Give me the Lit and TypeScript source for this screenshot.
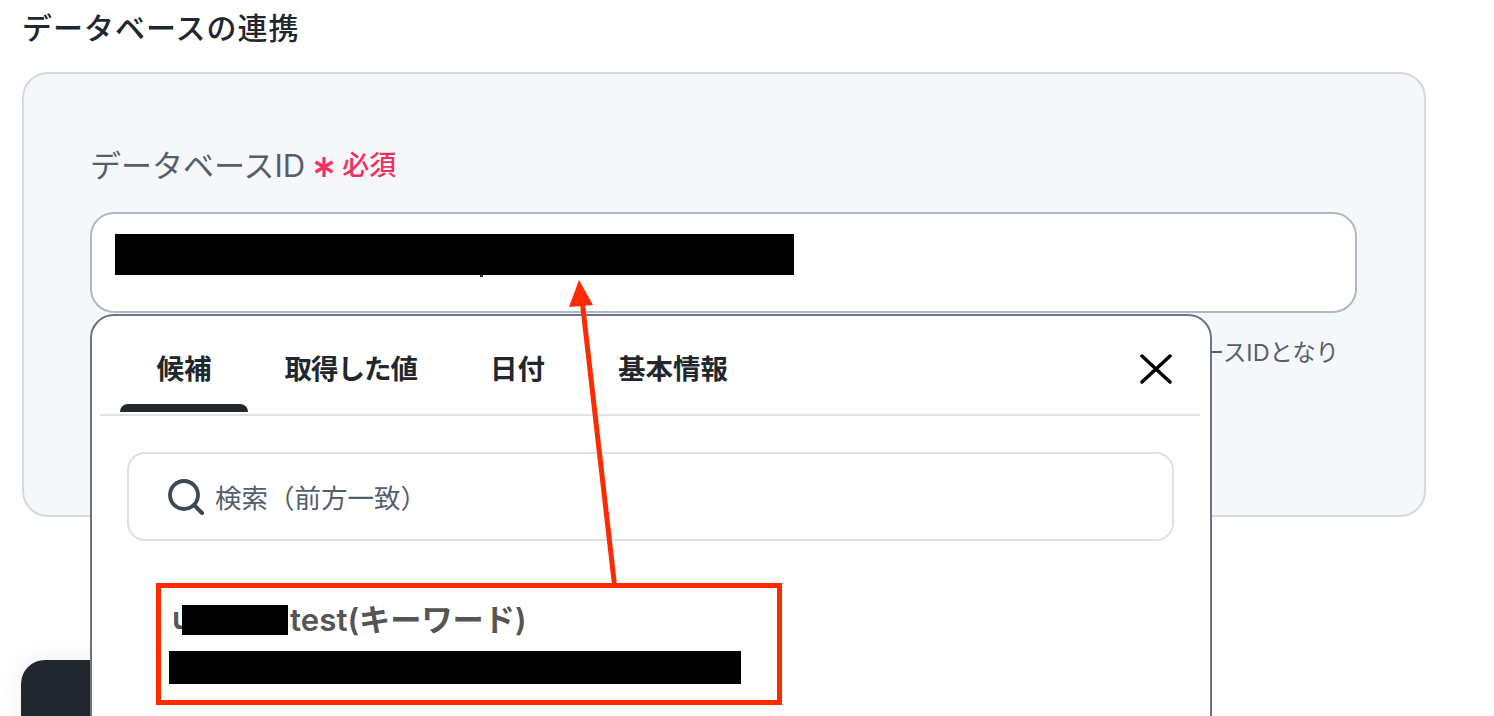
import { html, css, LitElement } from 'lit';
import { customElement } from 'lit/decorators.js';

const TABS = ['候補', '取得した値', '日付', '基本情報'];

@customElement('app-root')
export class AppRoot extends LitElement {
  static styles = css`
    :host {
      display: block;
      position: relative;
      width: 1494px;
      height: 716px;
      overflow: hidden;
      background: #fff;
      font-family: Inter, 'Noto Sans CJK JP', sans-serif;
      color: #22272e;
    }

    .page {
      padding: 8px 68px 0 22px;
    }

    h1 {
      margin: 0 0 24px;
      font-size: 30px;
      line-height: 40px;
      font-weight: 500;
      letter-spacing: 1px;
      color: #22272e;
    }

    .panel {
      box-sizing: border-box;
      height: 445px;
      padding: 67px 67px 0 66px;
      background: #f6f7f9;
      border: 2px solid #d3d9e1;
      border-radius: 26px;
    }

    .label {
      display: flex;
      align-items: center;
      height: 44px;
      font-size: 31px;
      color: #555f6b;
    }

    .star {
      margin: 8px 0 0 9px;
      width: 20px;
      height: 22px;
    }

    .required {
      margin-left: 8px;
      font-size: 27px;
      font-weight: 500;
      color: #f5305f;
    }

    .input {
      box-sizing: border-box;
      height: 101px;
      margin-top: 27px;
      padding: 20px 0 0 23px;
      background: #fff;
      border: 2px solid #b0b8c4;
      border-radius: 24px;
    }

    .mask {
      position: relative;
      width: 679px;
      height: 41px;
      background: #000;
    }

    .mask::after {
      content: '';
      position: absolute;
      left: 365px;
      top: 41px;
      width: 3px;
      height: 2px;
      background: #333;
    }

    .help {
      margin-top: 24px;
      padding-right: 18px;
      text-align: right;
      font-size: 23.4px;
      line-height: 32px;
      color: #555f6b;
      white-space: nowrap;
    }

    .action {
      position: absolute;
      left: 21px;
      top: 660px;
      width: 300px;
      height: 120px;
      background: #22272e;
      border-radius: 24px;
      box-shadow: 0 0 24px rgba(34, 39, 46, 0.08);
    }

    .dropdown {
      position: absolute;
      left: 90px;
      top: 314px;
      box-sizing: border-box;
      width: 1122px;
      height: 460px;
      padding: 0 10px 0 8px;
      background: #fff;
      border: 2px solid #6b7480;
      border-radius: 24px;
    }

    .tabs {
      position: relative;
      display: flex;
      align-items: flex-start;
      height: 98px;
      padding-left: 20px;
      border-bottom: 2px solid #dfe3e8;
    }

    .tab {
      box-sizing: border-box;
      height: 98px;
      padding: 33px 36.5px 0;
      font-size: 27.5px;
      line-height: 40px;
      font-weight: 700;
      white-space: nowrap;
      color: #22272e;
    }

    .tab:nth-child(2) {
      letter-spacing: -1px;
    }

    .tab.active {
      position: relative;
    }

    .tab.active::after {
      content: '';
      position: absolute;
      left: 0;
      right: 0;
      bottom: 2px;
      height: 8px;
      background: #22272e;
      border-radius: 8px 8px 0 0;
    }

    .close {
      position: absolute;
      right: 28px;
      top: 38px;
      width: 32px;
      height: 30px;
    }

    .search {
      box-sizing: border-box;
      display: flex;
      align-items: center;
      gap: 11px;
      height: 89px;
      margin: 36px 26px 0 27px;
      padding-left: 39px;
      border: 2px solid #dde2e8;
      border-radius: 18px;
      font-size: 26.5px;
      color: #555f6b;
    }

    .search svg {
      width: 36px;
      height: 36px;
      flex: none;
    }

    .result {
      box-sizing: border-box;
      width: 626px;
      height: 122px;
      margin: 42px 0 0 56px;
      padding: 12px 0 0 8px;
      border: 5px solid #ff2a00;
    }

    .name {
      display: flex;
      align-items: center;
      height: 40px;
      padding-left: 3px;
      font-size: 31.2px;
      font-weight: 600;
      color: #555;
      white-space: nowrap;
    }

    .name span {
      margin-bottom: 5px;
    }

    .name .name-mask {
      width: 106px;
      height: 30px;
      margin: 0 2px 0 -9px;
      background: #000;
    }

    .value-mask {
      width: 572px;
      height: 33px;
      margin-top: 11px;
      background: #000;
    }

    .arrow {
      position: absolute;
      left: 560px;
      top: 270px;
      width: 70px;
      height: 320px;
      pointer-events: none;
    }
  `;

  render() {
    return html`
      <div class="page">
        <h1>データベースの連携</h1>
        <section class="panel">
          <div class="label">
            データベースID
            <svg class="star" viewBox="0 0 20 22">
              <path d="M10 1v20M1.5 6l17 10M18.5 6l-17 10" stroke="#f5305f" stroke-width="3.2" fill="none" />
            </svg>
            <span class="required">必須</span>
          </div>
          <div class="input"><div class="mask"></div></div>
          <div class="help">データベースIDとなり</div>
        </section>
      </div>

      <div class="action"></div>

      <div class="dropdown">
        <div class="tabs">
          ${TABS.map((t, i) => html`<div class="tab ${i === 0 ? 'active' : ''}">${t}</div>`)}
          <svg class="close" viewBox="0 0 32 30">
            <path d="M2 2l28 26M30 2L2 28" stroke="#000" stroke-width="3.5" stroke-linecap="round" fill="none" />
          </svg>
        </div>
        <div class="search">
          <svg viewBox="0 0 36 36">
            <circle cx="16" cy="16" r="14" stroke="#3f4852" stroke-width="3.8" fill="none" />
            <path d="M26 26l8 8" stroke="#3f4852" stroke-width="4" stroke-linecap="round" />
          </svg>
          検索（前方一致）
        </div>
        <div class="result">
          <div class="name"><span>u</span><span class="name-mask"></span><span>test(キーワード)</span></div>
          <div class="value-mask"></div>
        </div>
      </div>

      <svg class="arrow" viewBox="0 0 70 320">
        <path d="M54.5 315L22.5 34" stroke="#ff2a00" stroke-width="5" fill="none" />
        <path d="M19 10L9 37L33 35Z" fill="#ff2a00" />
      </svg>
    `;
  }
}
